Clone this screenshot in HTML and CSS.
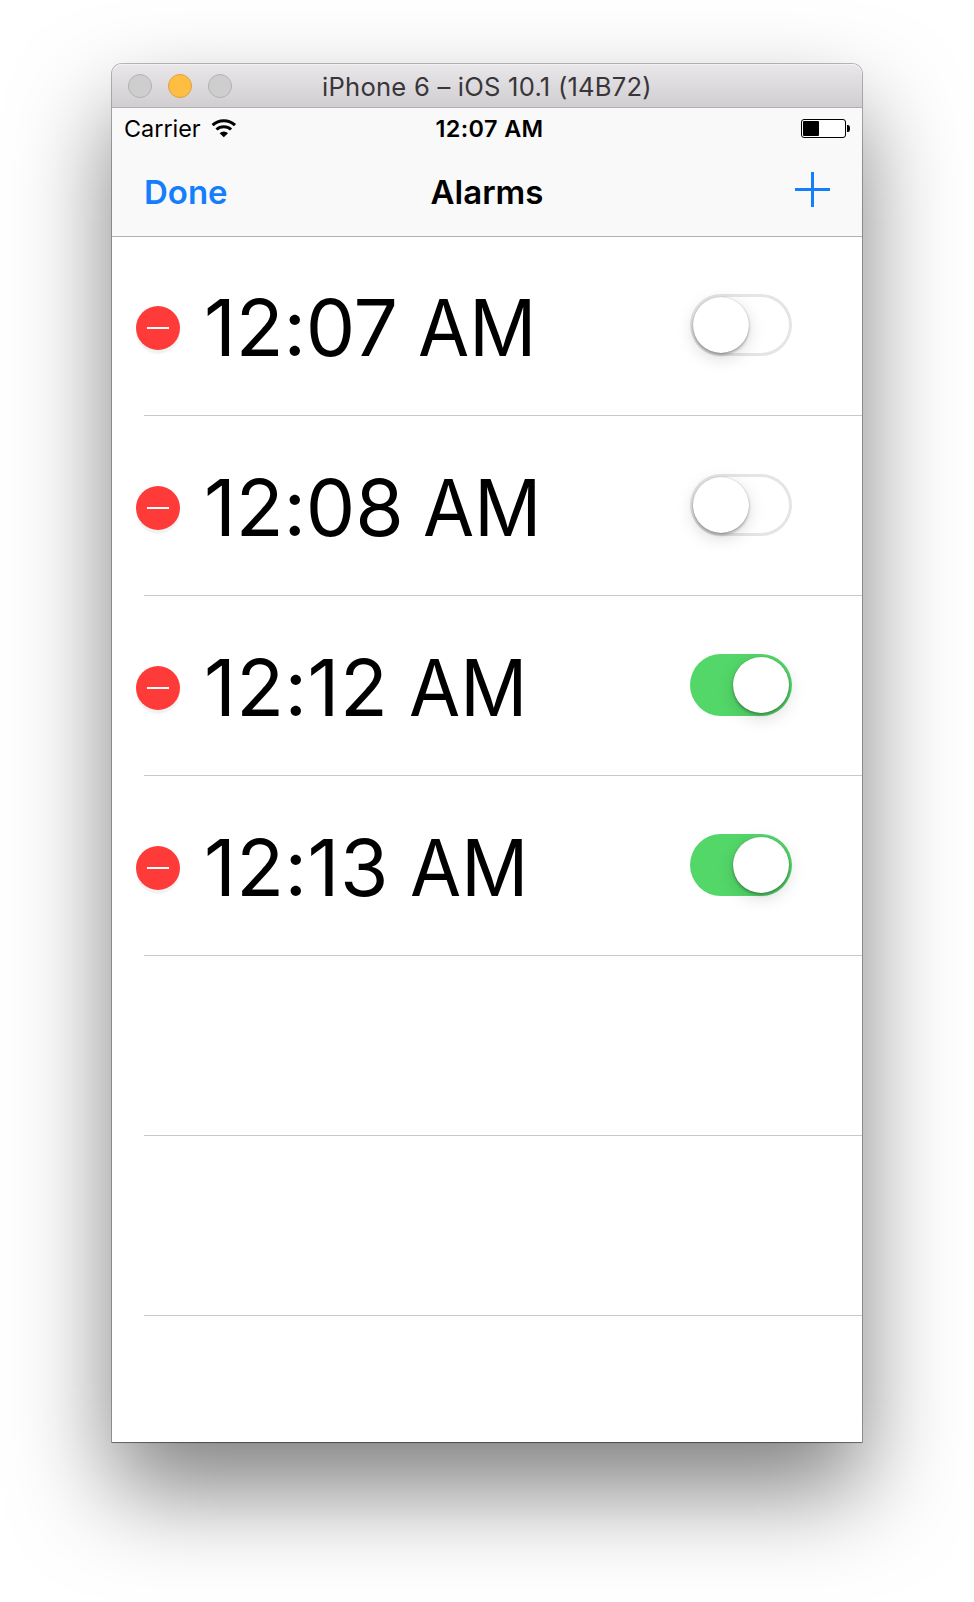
FILE: index.html
```html
<!DOCTYPE html>
<html lang="en">
<head>
<meta charset="utf-8">
<title>Alarms</title>
<link rel="stylesheet" href="styles.css">
</head>
<body>
<main class="window">
  <header class="titlebar">
    <div class="lights"><span class="light"></span><span class="light light-amber"></span><span class="light"></span></div>
    <h1 class="window-title">iPhone 6 – iOS 10.1 (14B72)</h1>
  </header>
  <div class="top">
    <div class="status">
      <div class="carrier"><span>Carrier</span>
        <svg class="wifi" width="26" height="19" viewBox="0 0 26 19"><path d="M1.6 6.2a16.3 16.3 0 0 1 22.4 0" fill="none" stroke="#000" stroke-width="3.1"/><path d="M5.5 10.5a10.8 10.8 0 0 1 14.6 0" fill="none" stroke="#000" stroke-width="3"/><path d="M8.6 14.2a6.2 6.2 0 0 1 8.4 0L12.8 18.3z"/></svg>
      </div>
      <div class="clock">12:07 AM</div>
      <svg class="battery" width="49" height="19" viewBox="0 0 49 19"><rect x=".5" y=".5" width="44" height="18" rx="2.5" fill="#fff" stroke="#000"/><rect x="2" y="2" width="16" height="15" rx="1"/><path d="M46 6h1a2 3.5 0 0 1 0 7h-1z"/></svg>
    </div>
    <nav class="nav">
      <a class="done">Done</a>
      <h2 class="heading">Alarms</h2>
      <svg class="plus" width="35" height="35" viewBox="0 0 35 35"><path d="M16 0h3v16h16v3H19v16h-3V19H0v-3h16z" fill="#157efb"/></svg>
    </nav>
  </div>
  <ul class="alarms">
    <li class="row"><span class="remove"></span><span class="time time-tight">12:07 <span class="period">AM</span></span><span class="switch"><i class="knob"></i></span></li>
    <li class="row"><span class="remove"></span><span class="time time-tight">12:08 <span class="period">AM</span></span><span class="switch"><i class="knob"></i></span></li>
    <li class="row"><span class="remove"></span><span class="time">12:12 <span class="period">AM</span></span><span class="switch switch-on"><i class="knob"></i></span></li>
    <li class="row"><span class="remove"></span><span class="time">12:13 <span class="period period-wide">AM</span></span><span class="switch switch-on"><i class="knob"></i></span></li>
    <li class="row"></li>
    <li class="row"></li>
  </ul>
</main>
</body>
</html>
```
FILE: styles.css
```css
* { box-sizing: border-box; }
body { margin: 0; padding-top: 64px; height: 1602px; overflow: hidden; background: #fff; font-family: Inter, "Liberation Sans", sans-serif; color: #000; }
.window { width: 750px; height: 1378px; margin-left: 112px; background: #fff; border-radius: 10px 10px 0 0; box-shadow: 0 0 0 1px rgba(0,0,0,.26), 0 1px 1px rgba(0,0,0,.3), 0 48px 96px rgba(0,0,0,.5); }
.titlebar { display: grid; grid-template-columns: 104px 1fr 104px; align-items: center; height: 44px; border-bottom: 1px solid #b1adb1; border-radius: 10px 10px 0 0; background: linear-gradient(#e9e7e9, #d1ced2); box-shadow: inset 0 1px #f4f3f4; }
.lights { display: flex; gap: 16px; padding-left: 16px; }
.light { flex: none; width: 24px; height: 24px; border: 1px solid #b3b1b3; border-radius: 50%; background: #cfcecf; }
.light-amber { border-color: #e1a03a; background: #fdbe41; }
.window-title { margin: 0; padding-top: 2px; text-align: center; font-size: 25.6px; font-weight: 400; letter-spacing: .22px; line-height: 40px; color: #39363a; white-space: nowrap; }
.top { height: 128px; background: #f9f9f9; box-shadow: 0 1px #b2b2b2; position: relative; }
.status { display: grid; grid-template-columns: 1fr auto 1fr; align-items: center; height: 40px; padding: 0 12px 0 12px; font-size: 23.4px; line-height: 38px; }
.carrier { display: flex; align-items: center; gap: 10px; }
.carrier span { padding-top: 2px; }
.clock { padding: 2px 0 0 5px; font-weight: 600; letter-spacing: .4px; }
.battery { justify-self: end; }
.nav { display: grid; grid-template-columns: 1fr auto 1fr; align-items: center; height: 88px; padding: 0 32px; font-size: 33px; font-weight: 600; line-height: 88px; }
.done { color: #157efb; }
.heading { margin: 0; font-size: inherit; font-weight: 600; }
.plus { justify-self: end; margin-bottom: 5px; }
.alarms { margin: 0; padding: 0; list-style: none; }
.row { display: flex; align-items: center; height: 180px; padding: 4px 70px 0 24px; background: linear-gradient(#c8c7cc, #c8c7cc) 32px 100% / 100% 1px no-repeat; }
.remove { display: flex; align-items: center; justify-content: center; flex: none; width: 44px; height: 44px; border-radius: 50%; background: #ff3b3a; box-shadow: 0 4px 1px rgba(0,0,0,.05); }
.remove::before { content: ""; width: 22px; height: 2px; background: #fff; }
.time { margin-left: 24px; font-size: 78.5px; letter-spacing: .4px; line-height: 90px; white-space: nowrap; }
.time-tight { letter-spacing: -.2px; }
.period { display: inline-block; margin-left: -2px; letter-spacing: 0; transform: scaleX(.945); transform-origin: 0 50%; }
.period-wide { margin-left: -1px; }
.switch { display: flex; width: 102px; height: 62px; margin: 0 0 6px auto; padding: 3px; border-radius: 31px; box-shadow: inset 0 0 0 3px #e5e5e5; }
.switch-on { justify-content: flex-end; background: #53d769; box-shadow: none; }
.knob { width: 56px; height: 56px; border-radius: 50%; background: #fff; box-shadow: 0 0 1px rgba(0,0,0,.3), 0 2px 3px rgba(0,0,0,.28), 0 5px 17px rgba(0,0,0,.15); }
```
